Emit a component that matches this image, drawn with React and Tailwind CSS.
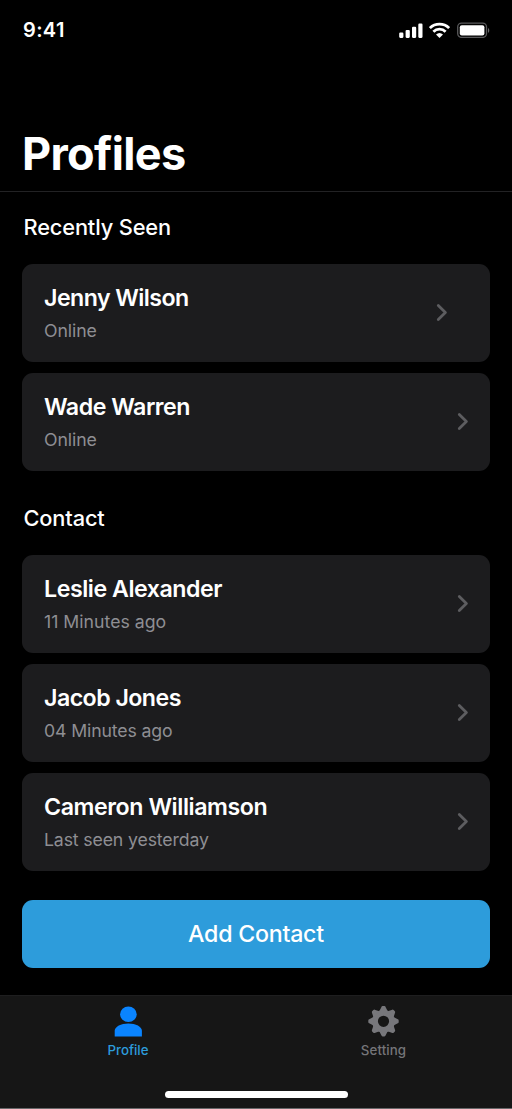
import React from "react";

const recentlySeen = [
  { name: "Jenny Wilson", status: "Online", nameClass: "tracking-[-0.56px]", statusClass: "tracking-[-0.1px]", chevronClass: "mr-[41px]" },
  { name: "Wade Warren", status: "Online", nameClass: "tracking-[-0.5px]", statusClass: "tracking-[-0.1px]", chevronClass: "mr-[20.5px]" },
];

const contacts = [
  { name: "Leslie Alexander", status: "11 Minutes ago", nameClass: "tracking-[-0.46px]", statusClass: "", chevronClass: "mr-[20.5px]" },
  { name: "Jacob Jones", status: "04 Minutes ago", nameClass: "tracking-[-0.55px]", statusClass: "tracking-[-0.13px]", chevronClass: "mr-[20.5px]" },
  { name: "Cameron Williamson", status: "Last seen yesterday", nameClass: "tracking-[-0.43px]", statusClass: "tracking-[-0.14px]", chevronClass: "mr-[20.5px]" },
];

function StatusBar() {
  return (
    <div className="flex h-[60px] items-center justify-between pl-[23px] pr-[22px]">
      <span className="text-[20px] font-semibold leading-6 tracking-[0.35px]">9:41</span>
      <div className="flex items-center">
        <svg width="24" height="16" viewBox="0 0 24 16" fill="white">
          <rect x="0.2" y="10.6" width="4.2" height="5.3" rx="1.1" />
          <rect x="6.6" y="7.9" width="4.2" height="8" rx="1.1" />
          <rect x="13" y="4.8" width="4.2" height="11.1" rx="1.1" />
          <rect x="19.3" y="1.6" width="4.2" height="14.3" rx="1.1" />
        </svg>
        <svg className="ml-[6px]" width="21" height="16" viewBox="0 0 21 16" fill="none" stroke="white" strokeWidth="2.8">
          <path d="M.9 6.1a13.8 13.8 0 0 1 19.2 0" />
          <path d="M4.4 9.7a8.7 8.7 0 0 1 12.2 0" />
          <path d="M7 12.5a5.2 5.2 0 0 1 7 0L10.5 15.9Z" fill="white" stroke="none" />
        </svg>
        <svg className="ml-[7px]" width="33" height="16" viewBox="0 0 33 16">
          <rect x=".7" y="1.2" width="28.8" height="14.2" rx="3.8" fill="none" stroke="#59595b" strokeWidth="1.3" />
          <rect x="2.8" y="3.2" width="24.6" height="10.2" rx="2" fill="white" />
          <path d="M31 5.9c1.7.7 1.7 4.2 0 4.9Z" fill="#68686a" />
        </svg>
      </div>
    </div>
  );
}

function ContactCard({ name, status, nameClass, statusClass, chevronClass }) {
  return (
    <button className="flex h-[98.2px] w-full items-center justify-between rounded-[11px] bg-[#1c1c1e] pl-[22px] text-left">
      <div>
        <div className={`text-[23.2px] font-semibold leading-[30px] ${nameClass}`}>{name}</div>
        <div className={`mt-[6px] text-[17.7px] leading-6 text-[#8e8e93] ${statusClass}`}>{status}</div>
      </div>
      <svg className={chevronClass} width="14" height="20" viewBox="0 0 14 20" fill="none" stroke="#5d5d60" strokeWidth="2.8" strokeLinecap="round" strokeLinejoin="round">
        <path d="M3.3 2.6l7.1 6.9-7.1 6.9" />
      </svg>
    </button>
  );
}

function ContactSection({ title, people }) {
  return (
    <section>
      <h2 className="pl-[1.5px] text-[21.8px] font-medium leading-7 tracking-[-0.15px]">{title}</h2>
      <div className="mt-[22.7px] flex flex-col gap-[11px]">
        {people.map((person) => (
          <ContactCard key={person.name} {...person} />
        ))}
      </div>
    </section>
  );
}

function ProfileIcon() {
  return (
    <svg width="32" height="32" viewBox="0 0 32 32" fill="#0a84ff">
      <ellipse cx="16.4" cy="8.2" rx="8.3" ry="7.8" />
      <path d="M2.7 30.5v-5.7c0-4.2 6.3-7.4 13.7-7.4s13.5 3.2 13.5 7.4v5.7Z" />
    </svg>
  );
}

function SettingIcon() {
  return (
    <svg width="32" height="32" viewBox="-15.5 -15.3 32 32" fill="#77777b">
      <circle r="8.5" fill="none" stroke="#77777b" strokeWidth="5.8" />
      {[0, 45, 90, 135, 180, 225, 270, 315].map((angle) => (
        <path key={angle} transform={`rotate(${angle})`} d="M-4.2-10 -2.3-13.8q.5-1.4 1.4-1.4h1.8q.9 0 1.4 1.4l1.9 3.8Z" />
      ))}
    </svg>
  );
}

export default function App() {
  return (
    <div className="flex h-[1109px] w-[512px] flex-col overflow-hidden bg-black font-['Inter',sans-serif] text-white">
      <StatusBar />
      <header className="flex h-[132px] items-end border-b border-[#222224] px-[22px] pb-[9px]">
        <h1 className="text-[45px] font-bold leading-[56px] tracking-[-0.65px]">Profiles</h1>
      </header>
      <main className="flex h-[802.5px] flex-col px-[22px] pt-[21px]">
        <ContactSection title="Recently Seen" people={recentlySeen} />
        <div className="mt-[33px]">
          <ContactSection title="Contact" people={contacts} />
        </div>
        <button className="mt-[29px] h-[68px] w-full shrink-0 rounded-[11px] bg-[#2d9cdb] text-[23.2px] font-medium tracking-[-0.25px]">Add Contact</button>
      </main>
      <footer className="flex flex-1 flex-col border-b border-[#68686a] bg-[#161616]">
        <nav className="grid h-[98px] grid-cols-2 border-t border-[#1e1e1f] pt-[10px] text-[13.3px] font-medium">
          <button className="flex flex-col items-center self-start text-[#2d9cdb]">
            <ProfileIcon />
            <span className="mt-1 leading-4">Profile</span>
          </button>
          <button className="flex flex-col items-center self-start pr-px text-[#757579]">
            <SettingIcon />
            <span className="mt-1 leading-4 tracking-[0.1px]">Setting</span>
          </button>
        </nav>
        <div className="mx-auto mt-[-2px] h-[7px] w-[183px] rounded-full bg-white" />
      </footer>
    </div>
  );
}
